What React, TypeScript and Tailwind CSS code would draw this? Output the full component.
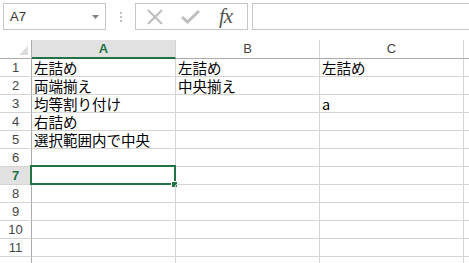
import React from "react";

// セルの内容 (行ごと A, B, C)
const cells: string[][] = [
  ["左詰め", "左詰め", "左詰め"],
  ["両端揃え", "中央揃え", ""],
  ["均等割り付け", "", "a"],
  ["右詰め", "", ""],
  ["選択範囲内で中央", "", ""],
  ["", "", ""],
  ["", "", ""],
  ["", "", ""],
  ["", "", ""],
  ["", "", ""],
  ["", "", ""],
];

const cols = ["A", "B", "C"];
const selectedRow = 7;
const selectedCol = 0;

function FormulaBar() {
  return (
    <div className="h-[40px] flex items-start pt-[3px] pl-[3px]">
      {/* 名前ボックス */}
      <div className="w-[103px] h-[27px] border border-[#c6c6c6] flex items-center justify-between pl-[6px] pr-[6px]">
        <span className="text-[13px] text-[#333]" style={{ fontFamily: '"Liberation Sans", Arial, sans-serif' }}>
          A7
        </span>
        <svg width="7" height="4" viewBox="0 0 7 4">
          <path d="M0 0 L7 0 L3.5 4 Z" fill="#808080" />
        </svg>
      </div>
      <div className="w-[29px] h-[27px] flex flex-col items-center justify-center gap-[2px]">
        <div className="w-[2px] h-[2px] bg-[#c0c0c0]" />
        <div className="w-[2px] h-[2px] bg-[#c0c0c0]" />
        <div className="w-[2px] h-[2px] bg-[#c0c0c0]" />
      </div>
      {/* キャンセル / 入力 / 関数 */}
      <div className="w-[113px] h-[27px] border border-[#c6c6c6] flex items-center">
        <svg width="18" height="16" viewBox="0 0 18 16" className="ml-[10px]">
          <path d="M2 1 L16 15 M16 1 L2 15" stroke="#bdbdbd" strokeWidth="2" fill="none" />
        </svg>
        <svg width="19" height="15" viewBox="0 0 19 15" className="ml-[17px]">
          <path d="M1 8 L6.5 13 L18 2" stroke="#bdbdbd" strokeWidth="3" fill="none" />
        </svg>
        <span
          className="ml-[19px] text-[21px] italic text-[#555] leading-none tracking-[-1px]"
          style={{ fontFamily: '"Liberation Serif", "Times New Roman", serif' }}
        >
          fx
        </span>
      </div>
      <div className="flex-1 ml-[4px] h-[27px] border border-r-0 border-[#c6c6c6]" />
    </div>
  );
}

function HeaderRow() {
  return (
    <div className="flex h-[19px]">
      <div className="w-[32px] shrink-0 border-b border-r border-[#ababab] relative">
        <svg width="10" height="10" viewBox="0 0 10 10" className="absolute left-[19px] top-[6px]">
          <path d="M9 0 L9 9 L0 9 Z" fill="#dcdcdc" />
        </svg>
      </div>
      {cols.map((c, i) => (
        <div
          key={c}
          className={
            i === selectedCol
              ? "w-[144px] shrink-0 bg-[#e1e1e1] border-b-2 border-b-[#217346] border-r border-r-[#d4d4d4] flex items-center justify-center text-[13px] font-bold text-[#217346]"
              : "w-[144px] shrink-0 border-b border-b-[#ababab] border-r border-r-[#d4d4d4] flex items-center justify-center text-[13px] text-[#444]"
          }
          style={{ fontFamily: '"Liberation Sans", Arial, sans-serif' }}
        >
          {c}
        </div>
      ))}
      <div className="flex-1 border-b border-[#ababab]" />
    </div>
  );
}

function Row({ n, values }: { n: number; values: string[] }) {
  const sel = n === selectedRow;
  return (
    <div className="flex h-[18px]">
      <div
        className={
          sel
            ? "w-[32px] shrink-0 bg-[#e1e1e1] border-b border-b-[#d4d4d4] border-r border-r-[#ababab] flex items-center justify-center text-[13px] font-bold text-[#217346]"
            : "w-[32px] shrink-0 border-b border-b-[#d4d4d4] border-r border-r-[#ababab] flex items-center justify-center text-[13px] text-[#444]"
        }
        style={{ fontFamily: '"Liberation Sans", Arial, sans-serif' }}
      >
        {n}
      </div>
      {values.map((v, i) => (
        <div
          key={i}
          className="w-[144px] shrink-0 border-b border-r border-[#d4d4d4] relative pl-[2px] text-[14.5px] leading-[17px] text-black whitespace-nowrap"
          style={{ fontFamily: '"MS PGothic", "Noto Sans CJK JP", sans-serif' }}
        >
          {v}
          {sel && i === selectedCol && (
            <div className="absolute -left-[2px] -top-[2px] -right-[1px] -bottom-[1px] border-2 border-[#217346]">
              <div className="absolute right-[-4px] bottom-[-5px] w-[7px] h-[7px] bg-[#217346] border border-white" />
            </div>
          )}
        </div>
      ))}
      <div className="flex-1 border-b border-[#d4d4d4]" />
    </div>
  );
}

export default function App() {
  return (
    <div className="w-[469px] h-[263px] overflow-hidden bg-white">
      <FormulaBar />
      <HeaderRow />
      {cells.map((r, i) => (
        <Row key={i} n={i + 1} values={r} />
      ))}
      {/* 画面下端で切れている12行目 */}
      <div className="flex h-[18px]">
        <div className="w-[32px] shrink-0 border-r border-[#ababab]" />
        {cols.map((c) => (
          <div key={c} className="w-[144px] shrink-0 border-r border-[#d4d4d4]" />
        ))}
      </div>
    </div>
  );
}
